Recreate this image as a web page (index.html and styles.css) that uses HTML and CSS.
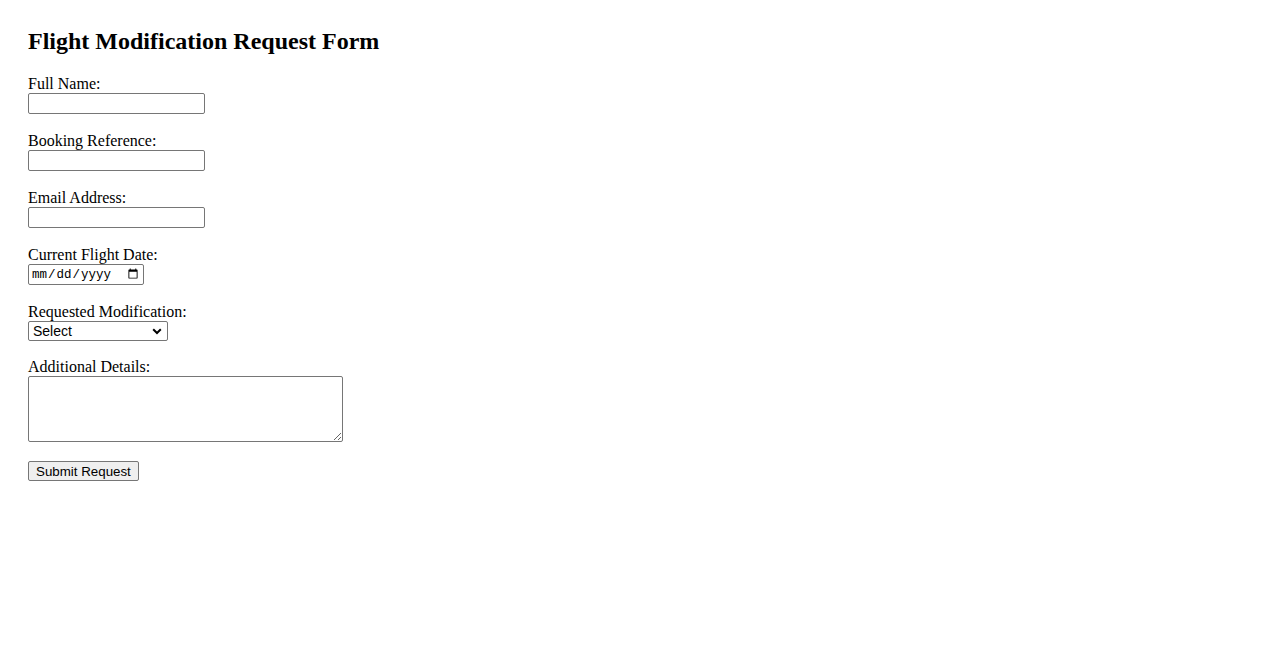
FILE: index.html
```html
<!DOCTYPE html>
<html lang="en">
<head>
    <meta charset="UTF-8">
    <meta name="viewport" content="width=device-width, initial-scale=1.0">
    <title>Flight Modification Request Form</title>
    <link rel="stylesheet" href="styles.css">
</head>
<body>
    <div class="container">
        <h2>Flight Modification Request Form</h2>

        <form id="modForm">
            <label for="full_name">Full Name:</label><br>
            <input type="text" id="full_name" name="full_name"><br><br>

            <label for="booking_ref">Booking Reference:</label><br>
            <input type="text" id="booking_ref" name="booking_ref"><br><br>

            <label for="email">Email Address:</label><br>
            <input type="email" id="email" name="email"><br><br>

            <label for="flight_date">Current Flight Date:</label><br>
            <input type="date" id="flight_date" name="flight_date"><br><br>

            <label for="modification">Requested Modification:</label><br>
            <select id="modification" name="modification">
                <option value="">Select</option>
                <option value="date">Change Date</option>
                <option value="route">Change Route</option>
                <option value="cancel">Cancel Flight</option>
            </select><br><br>

            <label for="details">Additional Details:</label><br>
            <textarea id="details" name="details" rows="4" cols="40"></textarea><br><br>

            <button type="submit">Submit Request</button>
        </form>
    </div>
</body>
</html>
```

FILE: styles.css
```css
body {
    font-family: "Liberation Serif", "Times New Roman", serif;
    font-size: 16px;
    margin: 8px;
    background-color: #fff;
    color: #000;
}
.container {
    padding: 20px;
}
h2 {
    font-size: 24px;
    margin: 0 0 20px 0;
}
input,
select,
textarea,
button {
    box-sizing: border-box;
    font-size: 13.33px;
    vertical-align: bottom;
}
input[type="text"],
input[type="email"] {
    font-family: "Liberation Sans", Arial, sans-serif;
    width: 177px;
    height: 21px;
    padding: 1px 2px;
    border: 1px solid #767676;
    border-radius: 2px;
    background-color: #fff;
}
input[type="date"] {
    font-family: "Liberation Mono", "Courier New", monospace;
    font-size: 12.5px;
    width: 116px;
    height: 21px;
    padding: 1px 2px;
    border: 1px solid #767676;
    border-radius: 2px;
    background-color: #fff;
}
select {
    -webkit-appearance: none;
    appearance: none;
    font-family: "Liberation Sans", Arial, sans-serif;
    font-size: 14px;
    width: 140px;
    height: 20px;
    margin-bottom: -1px;
    padding: 0 20px 0 4px;
    border: 1px solid #767676;
    border-radius: 2px;
    color: #000;
    background: #fff url("data:image/svg+xml,%3Csvg xmlns='http://www.w3.org/2000/svg' width='10' height='7' viewBox='0 0 10 7'%3E%3Cpath d='M1.2 1.3 L5 5 L8.8 1.3' fill='none' stroke='%23000' stroke-width='2'/%3E%3C/svg%3E") no-repeat right 5px center;
}
textarea {
    font-family: "Liberation Mono", "Courier New", monospace;
    width: 315px;
    height: 66px;
    margin-bottom: 1px;
    border: 1px solid #767676;
    border-radius: 2px;
    background-color: #fff;
}
button {
    font-family: "Liberation Sans", Arial, sans-serif;
    height: 20px;
    padding: 1px 7px;
    border: 1px solid #767676;
    border-radius: 2px;
    background-color: #efefef;
}
```
